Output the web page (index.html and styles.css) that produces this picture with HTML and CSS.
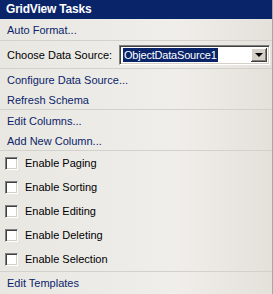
FILE: index.html
```html
<!DOCTYPE html>
<html lang="en">
<head>
  <meta charset="UTF-8" />
  <title>GridView Tasks</title>
  <link rel="stylesheet" href="styles.css">
</head>
<body>
  <div class="panel">
    <div class="header">GridView Tasks</div>

    <div class="section first">
      <a class="task" href="#">Auto Format...</a>
    </div>

    <div class="section source-row">
      <label class="source-label">Choose Data Source:</label>
      <div class="combo">
        <span class="combo-value"><span class="selected">ObjectDataSource1</span></span>
        <span class="combo-btn"><span class="arrow"></span></span>
      </div>
    </div>

    <div class="section">
      <a class="task" href="#">Configure Data Source...</a>
      <a class="task" href="#">Refresh Schema</a>
    </div>

    <div class="section">
      <a class="task" href="#">Edit Columns...</a>
      <a class="task" href="#">Add New Column...</a>
    </div>

    <div class="section">
      <label class="check"><span class="box"></span>Enable Paging</label>
      <label class="check"><span class="box"></span>Enable Sorting</label>
      <label class="check"><span class="box"></span>Enable Editing</label>
      <label class="check"><span class="box"></span>Enable Deleting</label>
      <label class="check"><span class="box"></span>Enable Selection</label>
    </div>

    <div class="section last">
      <a class="task" href="#">Edit Templates</a>
    </div>
  </div>
</body>
</html>
```

FILE: styles.css
```css
body {
  margin: 0;
  font-family: 'Liberation Sans', Arial, sans-serif;
  font-size: 11px;
  color: #000;
}

.panel {
  width: 272px;
  height: 294px;
  background: linear-gradient(to right, #e9e7e2 0%, #f0eeea 65%, #e4e1db 100%);
  border-right: 1px solid #a7a6aa;
  overflow: hidden;
}

.header {
  height: 19px;
  line-height: 19px;
  background: #0a246a;
  color: #fff;
  font-weight: bold;
  font-size: 12px;
  letter-spacing: -0.2px;
  padding-left: 6px;
}

.section {
  border-bottom: 1px solid #d3d1cb;
  display: flex;
  flex-direction: column;
}

.section.first {
  padding-bottom: 1px;
}

.section.last {
  border-bottom: none;
}

.task {
  display: block;
  height: 20px;
  line-height: 22px;
  padding-left: 7px;
  color: #0a246a;
  text-decoration: none;
}

.source-row {
  flex-direction: row;
  align-items: center;
  height: 27px;
}

.source-label {
  padding-left: 7px;
  width: 112px;
  white-space: nowrap;
}

.combo {
  display: flex;
  width: 151px;
  height: 20px;
  box-sizing: border-box;
  border: 1px solid;
  border-color: #808080 #fff #fff #808080;
  box-shadow: inset 1px 1px 0 #404040, inset -1px -1px 0 #d4d0c8;
  background: #fff;
  padding: 2px;
}

.combo-value {
  flex: 1;
  display: flex;
  align-items: center;
  padding-left: 1px;
  font-size: 11px;
}

.selected {
  background: #0a246a;
  color: #fff;
  padding: 0 1px;
  letter-spacing: -0.2px;
  line-height: 14px;
}

.combo-btn {
  width: 16px;
  background: #d4d0c8;
  box-shadow: inset -1px -1px 0 #404040, inset 1px 1px 0 #fff, inset -2px -2px 0 #808080;
  display: flex;
  align-items: center;
  justify-content: center;
}

.arrow {
  width: 0;
  height: 0;
  border-left: 4px solid transparent;
  border-right: 4px solid transparent;
  border-top: 4px solid #000;
  margin-top: 1px;
}

.check {
  display: flex;
  align-items: center;
  height: 24px;
  padding-left: 5px;
}

.box {
  width: 13px;
  height: 13px;
  box-sizing: border-box;
  border: 1px solid;
  border-color: #808080 #fff #fff #808080;
  box-shadow: inset 1px 1px 0 #404040, inset -1px -1px 0 #d4d0c8;
  background: #fff;
  margin-right: 7px;
}
```
